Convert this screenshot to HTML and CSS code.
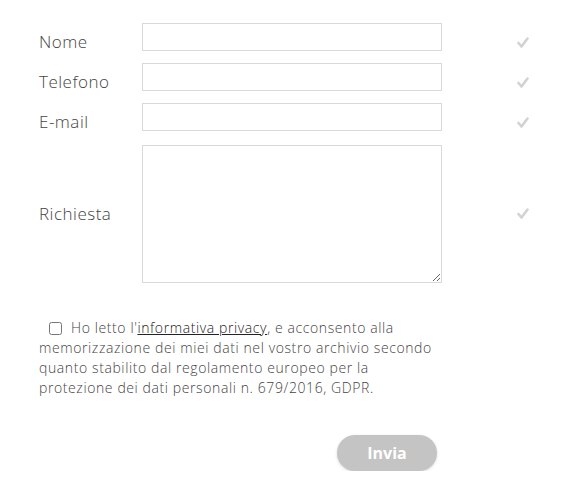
FILE: index.html
```html
<!DOCTYPE html>
<html lang="it">

  <head>
    <meta charset="UTF-8">
    <meta name="viewport" content="width=device-width, initial-scale=1.0">
    <title>Contatti</title>
    <link rel="stylesheet" href="styles.css">
  </head>

  <body>
    <form class="contact_form">
      <!-- campi -->
      <div class="fields">
        <label class="field_label" for="nome">Nome</label>
        <input class="field_input" id="nome" type="text">
        <span class="field_ok"><svg width="12" height="11" viewBox="0 0 12 11"><path d="M1.5 6 L4.5 9.5 L10.5 1.5" fill="none" stroke="#d2d2d2" stroke-width="2.6" stroke-linecap="round" stroke-linejoin="round"/></svg></span>

        <label class="field_label" for="telefono">Telefono</label>
        <input class="field_input" id="telefono" type="text">
        <span class="field_ok"><svg width="12" height="11" viewBox="0 0 12 11"><path d="M1.5 6 L4.5 9.5 L10.5 1.5" fill="none" stroke="#d2d2d2" stroke-width="2.6" stroke-linecap="round" stroke-linejoin="round"/></svg></span>

        <label class="field_label" for="email">E-mail</label>
        <input class="field_input" id="email" type="text">
        <span class="field_ok"><svg width="12" height="11" viewBox="0 0 12 11"><path d="M1.5 6 L4.5 9.5 L10.5 1.5" fill="none" stroke="#d2d2d2" stroke-width="2.6" stroke-linecap="round" stroke-linejoin="round"/></svg></span>

        <label class="field_label field_label_big" for="richiesta">Richiesta</label>
        <textarea class="field_input field_area" id="richiesta"></textarea>
        <span class="field_ok field_ok_big"><svg width="12" height="11" viewBox="0 0 12 11"><path d="M1.5 6 L4.5 9.5 L10.5 1.5" fill="none" stroke="#d2d2d2" stroke-width="2.6" stroke-linecap="round" stroke-linejoin="round"/></svg></span>
      </div>

      <!-- privacy -->
      <div class="privacy">
        <input class="privacy_check" type="checkbox">
        <p class="privacy_text">Ho letto l'<a href="#">informativa privacy</a>, e acconsento alla memorizzazione dei miei dati nel vostro archivio secondo quanto stabilito dal regolamento europeo per la protezione dei dati personali n. 679/2016, GDPR.</p>
      </div>

      <div class="send">
        <button class="send_btn" type="button">Invia</button>
      </div>
    </form>
  </body>

</html>
```

FILE: styles.css
```css
* {
  margin: 0;
  padding: 0;
  box-sizing: border-box;
}

body {
  background-color: #fff;
  font-family: "Open Sans", "Noto Sans", sans-serif;
  color: #555;
}

.contact_form {
  padding: 23px 0 0 39px;
}

.fields {
  display: grid;
  grid-template-columns: 103px 300px 75px 14px;
  row-gap: 12px;
  align-items: center;
}

.field_label {
  font-size: 17px;
  font-weight: 300;
  letter-spacing: 0.5px;
  line-height: 18px;
  padding-top: 10px;
  color: #444;
}

.field_label_big {
  padding-top: 1px;
}

.field_input {
  height: 28px;
  border: 1px solid #d9d9d9;
  background-color: #fff;
  font-family: inherit;
  font-size: 14px;
  outline: none;
}

.field_area {
  height: 138px;
  margin-top: 2px;
  resize: vertical;
}

.field_ok {
  grid-column: 4;
  display: flex;
  height: 28px;
  align-items: center;
  padding-top: 10px;
}

.field_ok_big {
  padding-top: 1px;
}

.privacy {
  position: relative;
  width: 400px;
  margin-top: 35px;
}

.privacy_check {
  position: absolute;
  left: 10px;
  top: 4px;
  width: 13px;
  height: 13px;
}

.privacy_text {
  font-size: 14px;
  font-weight: 300;
  letter-spacing: 0.6px;
  line-height: 20px;
  color: #444;
  text-indent: 32px;
}

.privacy_text a {
  color: #222;
  text-decoration: underline;
}

.send {
  padding: 37px 0 0 298px;
}

.send_btn {
  width: 100px;
  height: 36px;
  border: none;
  border-radius: 18px;
  background-color: #c4c4c4;
  color: #fff;
  font-family: "Open Sans", sans-serif;
  font-weight: bold;
  font-size: 16px;
  box-shadow: 0 1px 3px rgba(0, 0, 0, 0.15);
}
```
